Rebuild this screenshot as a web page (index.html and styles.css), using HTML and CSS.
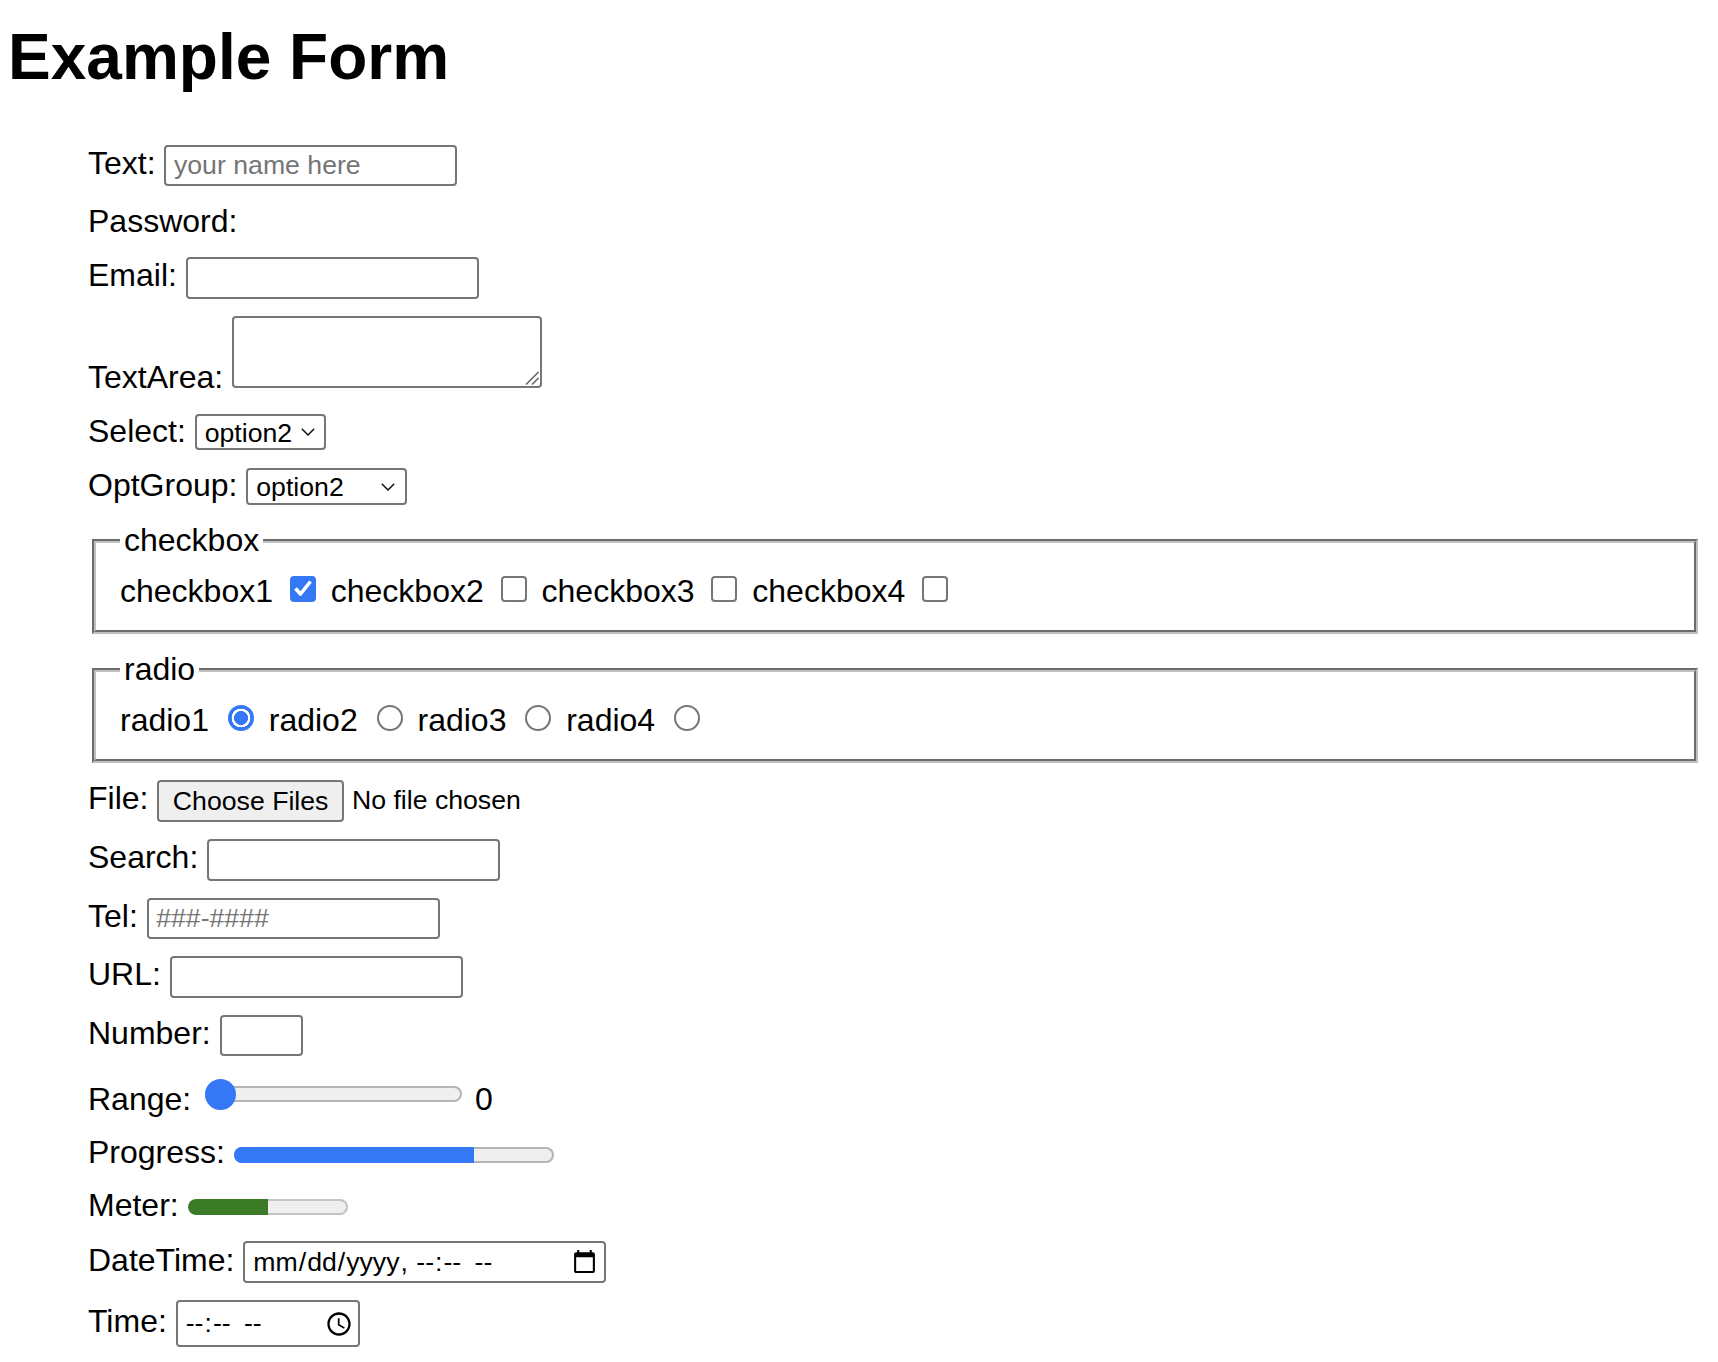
FILE: index.html
```html
<!DOCTYPE html>
<html lang="en">
<head>
<meta charset="utf-8">
<title>Example Form</title>
<link rel="stylesheet" href="styles.css">
</head>
<body>
<h1 class="title">Example Form</h1>
<form class="form">
  <div class="row"><label for="f-text">Text:</label> <input class="field" id="f-text" type="text" placeholder="your name here"></div>
  <div class="row"><label for="f-pass">Password:</label></div>
  <div class="row"><label for="f-email">Email:</label> <input class="field" id="f-email" type="email"></div>
  <div class="row"><label for="f-area">TextArea:</label> <textarea class="memo" id="f-area"></textarea></div>
  <div class="row"><label for="f-select">Select:</label> <select class="picker picker-short" id="f-select"><option>option1</option><option selected>option2</option><option>option3</option></select></div>
  <div class="row"><label for="f-group">OptGroup:</label> <select class="picker picker-wide" id="f-group"><optgroup label="group1"><option>option1</option><option selected>option2</option></optgroup><optgroup label="group2"><option>option3</option><option>option4</option></optgroup></select></div>
  <fieldset class="group">
    <legend class="group-legend">checkbox</legend>
    <label>checkbox1 <input class="check" type="checkbox" checked></label>
    <label>checkbox2 <input class="check" type="checkbox"></label>
    <label>checkbox3 <input class="check" type="checkbox"></label>
    <label>checkbox4 <input class="check" type="checkbox"></label>
  </fieldset>
  <fieldset class="group">
    <legend class="group-legend">radio</legend>
    <label>radio1 <input class="choice" type="radio" name="r" checked></label>
    <label>radio2 <input class="choice" type="radio" name="r"></label>
    <label>radio3 <input class="choice" type="radio" name="r"></label>
    <label>radio4 <input class="choice" type="radio" name="r"></label>
  </fieldset>
  <div class="row"><label for="f-file">File:</label> <input class="upload" id="f-file" type="file" multiple></div>
  <div class="row"><label for="f-search">Search:</label> <input class="field" id="f-search" type="search"></div>
  <div class="row"><label for="f-tel">Tel:</label> <input class="field" id="f-tel" type="tel" placeholder="###-####"></div>
  <div class="row"><label for="f-url">URL:</label> <input class="field" id="f-url" type="url"></div>
  <div class="row"><label for="f-num">Number:</label> <input class="field field-short" id="f-num" type="number"></div>
  <div class="row"><label for="f-range">Range:</label> <input class="slider" id="f-range" type="range" min="0" max="100" value="0"> <output class="readout">0</output></div>
  <div class="row row-tight"><label>Progress:</label> <progress class="bar" max="100" value="75"></progress></div>
  <div class="row row-tight"><label>Meter:</label> <meter class="gauge" min="0" max="100" value="50"></meter></div>
  <div class="row"><label for="f-dt">DateTime:</label> <input class="stamp stamp-long" id="f-dt" type="datetime-local"></div>
  <div class="row"><label for="f-time">Time:</label> <input class="stamp stamp-short" id="f-time" type="time"></div>
</form>
</body>
</html>
```
FILE: styles.css
```css
html {
  background: #fff;
}

body {
  margin: 0;
  padding: 20px 16px 0 8px;
  font-family: "Liberation Sans", Arial, sans-serif;
  font-size: 32px;
  color: #000;
}

.title {
  margin: 0 0 50.5px;
  font-size: 64px;
  font-weight: 700;
}

.form {
  display: flex;
  flex-direction: column;
  gap: 17px;
  padding-left: 80px;
}

.row {
  white-space: nowrap;
}

.row-tight {
  margin-top: -1px;
}

.field {
  -webkit-appearance: none;
  appearance: none;
  box-sizing: border-box;
  width: 293px;
  height: 41.5px;
  margin: 0;
  padding: 0 8px 0 7.5px;
  border: 2px solid #767676;
  border-radius: 4px;
  background: #fff;
  color: #000;
  font: 26.67px "Liberation Sans", Arial, sans-serif;
}

.field::placeholder {
  color: #757575;
}

.field-short {
  width: 83.5px;
}

.field::-webkit-inner-spin-button,
.field::-webkit-outer-spin-button,
.field::-webkit-search-cancel-button {
  -webkit-appearance: none;
  display: none;
}

.memo {
  box-sizing: border-box;
  width: 310px;
  height: 72px;
  margin: 0;
  padding: 4px;
  border: 2px solid #767676;
  border-radius: 4px;
  font: 26.67px "Liberation Sans", Arial, sans-serif;
  vertical-align: baseline;
}

.memo::-webkit-resizer {
  background: url("data:image/svg+xml,%3Csvg xmlns='http://www.w3.org/2000/svg' viewBox='0 0 16 16'%3E%3Cpath d='M2 14.5L14.5 2M8 14.5L14.5 8' fill='none' stroke='%23666' stroke-width='1.6'/%3E%3C/svg%3E") no-repeat right bottom / 16px 16px;
}

.picker {
  -webkit-appearance: none;
  appearance: none;
  box-sizing: border-box;
  height: 36px;
  margin: 0;
  padding: 1px 30px 0 8px;
  border: 2px solid #767676;
  border-radius: 4px;
  color: #000;
  font: 26.67px "Liberation Sans", Arial, sans-serif;
  background: #fff url("data:image/svg+xml,%3Csvg xmlns='http://www.w3.org/2000/svg' viewBox='0 0 14 8'%3E%3Cpath d='M0.8 0.8L7 7L13.2 0.8' fill='none' stroke='%23111' stroke-width='1.5'/%3E%3C/svg%3E") no-repeat right 9px center / 14px 8px;
}

.picker-short {
  width: 131.5px;
}

.picker-wide {
  width: 161px;
  height: 37px;
  background-position: right 10px center;
}

.group {
  margin: 0 4px;
  padding: 11.2px 24px 20px;
  border: 4px groove #c0c0c0;
  min-width: 0;
  white-space: nowrap;
}

.group-legend {
  padding: 0 4px;
}

.check {
  -webkit-appearance: none;
  appearance: none;
  box-sizing: border-box;
  width: 26px;
  height: 26px;
  margin: 6px 6px 0 8px;
  border: 2px solid #767676;
  border-radius: 4px;
  background: #fff;
  vertical-align: baseline;
}

.check:checked {
  border-color: #3478f6;
  background: #3478f6 url("data:image/svg+xml,%3Csvg xmlns='http://www.w3.org/2000/svg' viewBox='0 0 26 26'%3E%3Cpath d='M5.5 12.5l5 5.5L20.5 5.5' fill='none' stroke='%23fff' stroke-width='3.6' stroke-linejoin='round'/%3E%3C/svg%3E") no-repeat center / 26px 26px;
  background-origin: border-box;
}

.choice {
  -webkit-appearance: none;
  appearance: none;
  box-sizing: border-box;
  width: 26px;
  height: 26px;
  margin: 6px 6px 0 10px;
  border: 2px solid #767676;
  border-radius: 50%;
  background: #fff;
  vertical-align: baseline;
}

.choice:checked {
  border-color: #3478f6;
  background: radial-gradient(circle closest-side, #3478f6 62%, #fff 65%, #fff 84%, #3478f6 87%);
}

.upload {
  margin: 0;
  color: #000;
  font: 26.67px "Liberation Sans", Arial, sans-serif;
}

.upload::file-selector-button {
  box-sizing: border-box;
  height: 41.7px;
  margin: 0 8px 0 0;
  padding: 0 13.5px;
  border: 2px solid #767676;
  border-radius: 4px;
  background: #efefef;
  color: #000;
  font: inherit;
}

.slider {
  -webkit-appearance: none;
  appearance: none;
  width: 257px;
  height: 32px;
  margin: 5px 4px 0 5px;
  padding: 0;
  background: transparent;
  vertical-align: baseline;
}

.slider::-webkit-slider-runnable-track {
  height: 16px;
  border-radius: 8px;
  background: #efefef;
  box-shadow: inset 0 0 0 2px #b5b5b5;
}

.slider::-webkit-slider-thumb {
  -webkit-appearance: none;
  appearance: none;
  width: 31px;
  height: 31px;
  margin-top: -7.5px;
  border: 0;
  border-radius: 50%;
  background: #3478f6;
}

.readout {
  font-size: 32px;
}

.bar {
  -webkit-appearance: none;
  appearance: none;
  box-sizing: border-box;
  width: 320px;
  height: 16px;
  margin: 0;
  border: 0;
  background: transparent;
  vertical-align: baseline;
}

.bar::-webkit-progress-bar {
  background: #efefef;
  border-radius: 8px;
  box-shadow: inset 0 0 0 2px #b5b5b5;
}

.bar::-webkit-progress-value {
  background: #3478f6;
  border-radius: 8px 0 0 8px;
}

.gauge {
  -webkit-appearance: none;
  appearance: none;
  box-sizing: border-box;
  width: 160px;
  height: 16px;
  margin: 0;
  border: 0;
  background: transparent;
  vertical-align: 1px;
}

.gauge::-webkit-meter-bar {
  height: 16px;
  border: 0;
  border-radius: 8px;
  background: #efefef;
  box-shadow: inset 0 0 0 2px #c4c4c4;
}

.gauge::-webkit-meter-optimum-value {
  background: #3b7b28;
  border-radius: 8px 0 0 8px;
}

.stamp {
  box-sizing: border-box;
  height: 42px;
  margin: 0;
  padding: 0 4px 0 7px;
  border: 2px solid #767676;
  border-radius: 4px;
  background: #fff;
  color: #000;
  font: 26.67px "Liberation Sans", Arial, sans-serif;
}

.stamp::-webkit-datetime-edit-ampm-field {
  margin-left: 6px;
}

.stamp-long {
  width: 362.4px;
}

.stamp-short {
  width: 184.6px;
  height: 47.3px;
  padding-right: 2px;
}
```
